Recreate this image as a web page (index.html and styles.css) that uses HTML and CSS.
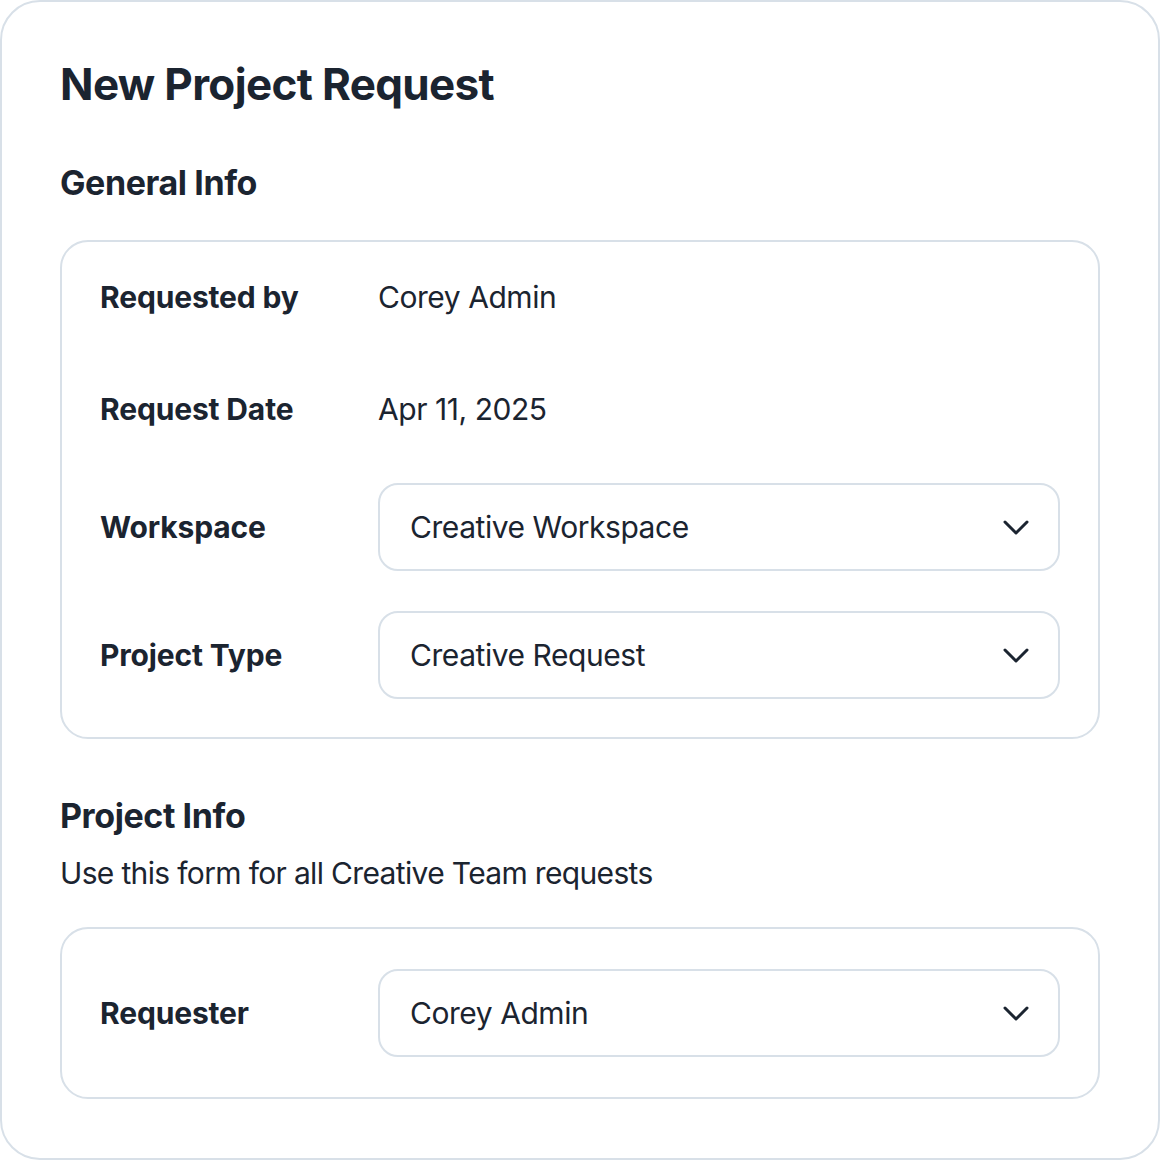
FILE: index.html
```html
<!DOCTYPE html>
<html lang="en">
<head>
<meta charset="utf-8">
<title>New Project Request</title>
<link rel="stylesheet" href="styles.css">
</head>
<body>
<div class="page-card">
  <h1 class="title">New Project Request</h1>

  <h2 class="section-title section-general">General Info</h2>
  <div class="panel panel-general">
    <div class="row row-1">
      <div class="label">Requested by</div>
      <div class="value">Corey Admin</div>
    </div>
    <div class="row row-2">
      <div class="label">Request Date</div>
      <div class="value">Apr 11, 2025</div>
    </div>
    <div class="row row-3">
      <div class="label">Workspace</div>
      <div class="select">
        <span class="select-text">Creative Workspace</span>
        <svg class="chevron" width="26" height="15" viewBox="0 0 26 15"><path d="M2 2 L13 13 L24 2" fill="none" stroke="#1b2430" stroke-width="3" stroke-linecap="round" stroke-linejoin="round"/></svg>
      </div>
    </div>
    <div class="row row-4">
      <div class="label">Project Type</div>
      <div class="select">
        <span class="select-text">Creative Request</span>
        <svg class="chevron" width="26" height="15" viewBox="0 0 26 15"><path d="M2 2 L13 13 L24 2" fill="none" stroke="#1b2430" stroke-width="3" stroke-linecap="round" stroke-linejoin="round"/></svg>
      </div>
    </div>
  </div>

  <h2 class="section-title section-project">Project Info</h2>
  <p class="subtitle">Use this form for all Creative Team requests</p>
  <div class="panel panel-project">
    <div class="row">
      <div class="label">Requester</div>
      <div class="select">
        <span class="select-text">Corey Admin</span>
        <svg class="chevron" width="26" height="15" viewBox="0 0 26 15"><path d="M2 2 L13 13 L24 2" fill="none" stroke="#1b2430" stroke-width="3" stroke-linecap="round" stroke-linejoin="round"/></svg>
      </div>
    </div>
  </div>
</div>
</body>
</html>
```

FILE: styles.css
```css
* { box-sizing: border-box; }

html, body {
  margin: 0;
  padding: 0;
  background: #ffffff;
}

body {
  font-family: Inter, "Noto Sans", "Liberation Sans", sans-serif;
  color: #1b2430;
}

.page-card {
  width: 1160px;
  height: 1160px;
  border: 2px solid #d8e0e8;
  border-radius: 40px;
  padding: 56px 58px 58px;
  background: #ffffff;
}

.title {
  margin: 0;
  font-size: 44px;
  line-height: 53px;
  font-weight: 700;
  letter-spacing: -0.015em;
}

.section-title {
  margin: 0;
  font-size: 34px;
  line-height: 41px;
  font-weight: 700;
  letter-spacing: -0.012em;
}

.section-general { margin-top: 51px; }
.section-project { margin-top: 56px; }

.subtitle {
  margin: 19px 0 0;
  font-size: 30px;
  line-height: 36px;
  font-weight: 400;
  letter-spacing: -0.022em;
}

.panel {
  border: 2px solid #d8e0e8;
  border-radius: 28px;
  padding: 37px 38px 38px;
}

.panel-general { margin-top: 37px; }
.panel-project { margin-top: 36px; padding: 40px 38px 40px; }

.row {
  display: flex;
  align-items: center;
  min-height: 36px;
}

.row-2 { margin-top: 76px; }
.row-3 { margin-top: 56px; }
.row-4 { margin-top: 40px; }

.label {
  width: 278px;
  flex: none;
  font-size: 30px;
  line-height: 36px;
  font-weight: 700;
  letter-spacing: -0.005em;
}

.value {
  font-size: 30px;
  line-height: 36px;
  font-weight: 400;
  letter-spacing: -0.015em;
}

.select {
  flex: 1;
  height: 88px;
  border: 2px solid #d8e0e8;
  border-radius: 20px;
  padding: 0 30px;
  display: flex;
  align-items: center;
  justify-content: space-between;
}

.select-text {
  font-size: 30px;
  line-height: 36px;
  font-weight: 400;
  letter-spacing: -0.015em;
}

.chevron {
  flex: none;
  display: block;
  margin-right: -1px;
}
```
